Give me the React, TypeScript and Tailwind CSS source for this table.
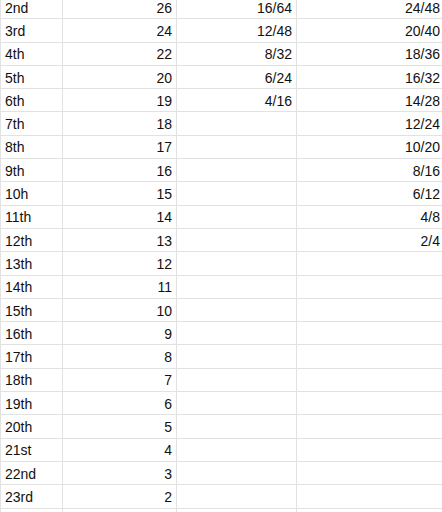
const rows: [string, string, string, string][] = [
  ["2nd", "26", "16/64", "24/48"],
  ["3rd", "24", "12/48", "20/40"],
  ["4th", "22", "8/32", "18/36"],
  ["5th", "20", "6/24", "16/32"],
  ["6th", "19", "4/16", "14/28"],
  ["7th", "18", "", "12/24"],
  ["8th", "17", "", "10/20"],
  ["9th", "16", "", "8/16"],
  ["10h", "15", "", "6/12"],
  ["11th", "14", "", "4/8"],
  ["12th", "13", "", "2/4"],
  ["13th", "12", "", ""],
  ["14th", "11", "", ""],
  ["15th", "10", "", ""],
  ["16th", "9", "", ""],
  ["17th", "8", "", ""],
  ["18th", "7", "", ""],
  ["19th", "6", "", ""],
  ["20th", "5", "", ""],
  ["21st", "4", "", ""],
  ["22nd", "3", "", ""],
  ["23rd", "2", "", ""],
  ["", "", "", ""],
];

const cell =
  "flex h-full items-center border-r border-[#e2e2e2] px-[4px] pt-[2px] whitespace-nowrap";

export default function App() {
  return (
    <div className="h-[512px] w-[442px] overflow-hidden bg-white font-['Liberation_Sans',Arial,sans-serif] text-[14px] text-[#111]">
      <div className="-mt-[4px] w-[446px] border-l border-[#e2e2e2]">
        {rows.map(([a, b, c, d], i) => (
          <div
            key={i}
            className="flex h-[23.3px] border-b border-[#e2e2e2]"
          >
            <div className={`${cell} w-[62px] justify-start`}>{a}</div>
            <div className={`${cell} w-[114px] justify-end`}>{b}</div>
            <div className={`${cell} w-[120px] justify-end`}>{c}</div>
            <div className={`${cell} w-[148px] justify-end`}>{d}</div>
          </div>
        ))}
      </div>
    </div>
  );
}
